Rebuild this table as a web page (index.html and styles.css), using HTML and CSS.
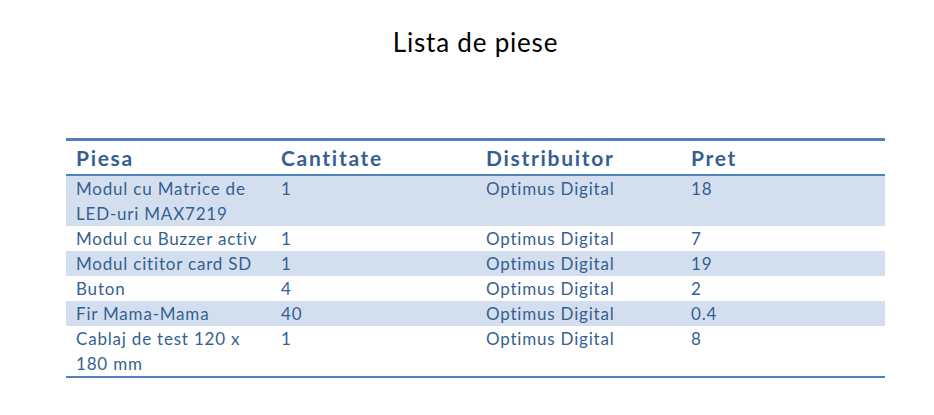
FILE: index.html
```html
<!DOCTYPE html>
<html lang="ro">
<head>
<meta charset="utf-8">
<title>Lista de piese</title>
<link rel="stylesheet" href="styles.css">
</head>
<body>
<div class="page">
  <h1 class="title">Lista de piese</h1>
  <table class="parts">
    <colgroup>
      <col class="c1"><col class="c2"><col class="c3"><col class="c4">
    </colgroup>
    <thead>
      <tr><th>Piesa</th><th>Cantitate</th><th>Distribuitor</th><th>Pret</th></tr>
    </thead>
    <tbody>
      <tr class="shade"><td>Modul cu Matrice de<br>LED-uri MAX7219</td><td>1</td><td>Optimus Digital</td><td>18</td></tr>
      <tr><td>Modul cu Buzzer activ</td><td>1</td><td>Optimus Digital</td><td>7</td></tr>
      <tr class="shade"><td>Modul cititor card SD</td><td>1</td><td>Optimus Digital</td><td>19</td></tr>
      <tr><td>Buton</td><td>4</td><td>Optimus Digital</td><td>2</td></tr>
      <tr class="shade"><td>Fir Mama-Mama</td><td>40</td><td>Optimus Digital</td><td>0.4</td></tr>
      <tr><td>Cablaj de test 120 x<br>180 mm</td><td>1</td><td>Optimus Digital</td><td>8</td></tr>
    </tbody>
  </table>
</div>
</body>
</html>
```
FILE: styles.css
```css
html, body {
  margin: 0;
  padding: 0;
  background: #ffffff;
}

body {
  font-family: Lato, "Liberation Sans", sans-serif;
}

.page {
  width: 819px;
  margin-left: 66px;
  padding-top: 26px;
}

.title {
  margin: 0;
  font-size: 26px;
  line-height: 32px;
  font-weight: normal;
  letter-spacing: 0.8px;
  color: #000000;
  text-align: center;
}

.parts {
  margin-top: 80px;
  width: 819px;
  table-layout: fixed;
  border-collapse: separate;
  border-spacing: 0;
  border-top: 3px solid #4f81bd;
  border-bottom: 2px solid #4f81bd;
  color: #365f91;
}

.c1, .c2, .c3 { width: 205px; }
.c4 { width: 204px; }

.parts th {
  text-align: left;
  font-size: 21px;
  font-weight: bold;
  letter-spacing: 1.7px;
  line-height: 33px;
  padding: 0 10px;
  border-bottom: 2px solid #4f81bd;
}

.parts td {
  font-size: 17px;
  letter-spacing: 0.8px;
  line-height: 25px;
  padding: 0 10px;
  vertical-align: top;
  white-space: nowrap;
}

.parts .shade td {
  background: #d3dfee;
}
```
